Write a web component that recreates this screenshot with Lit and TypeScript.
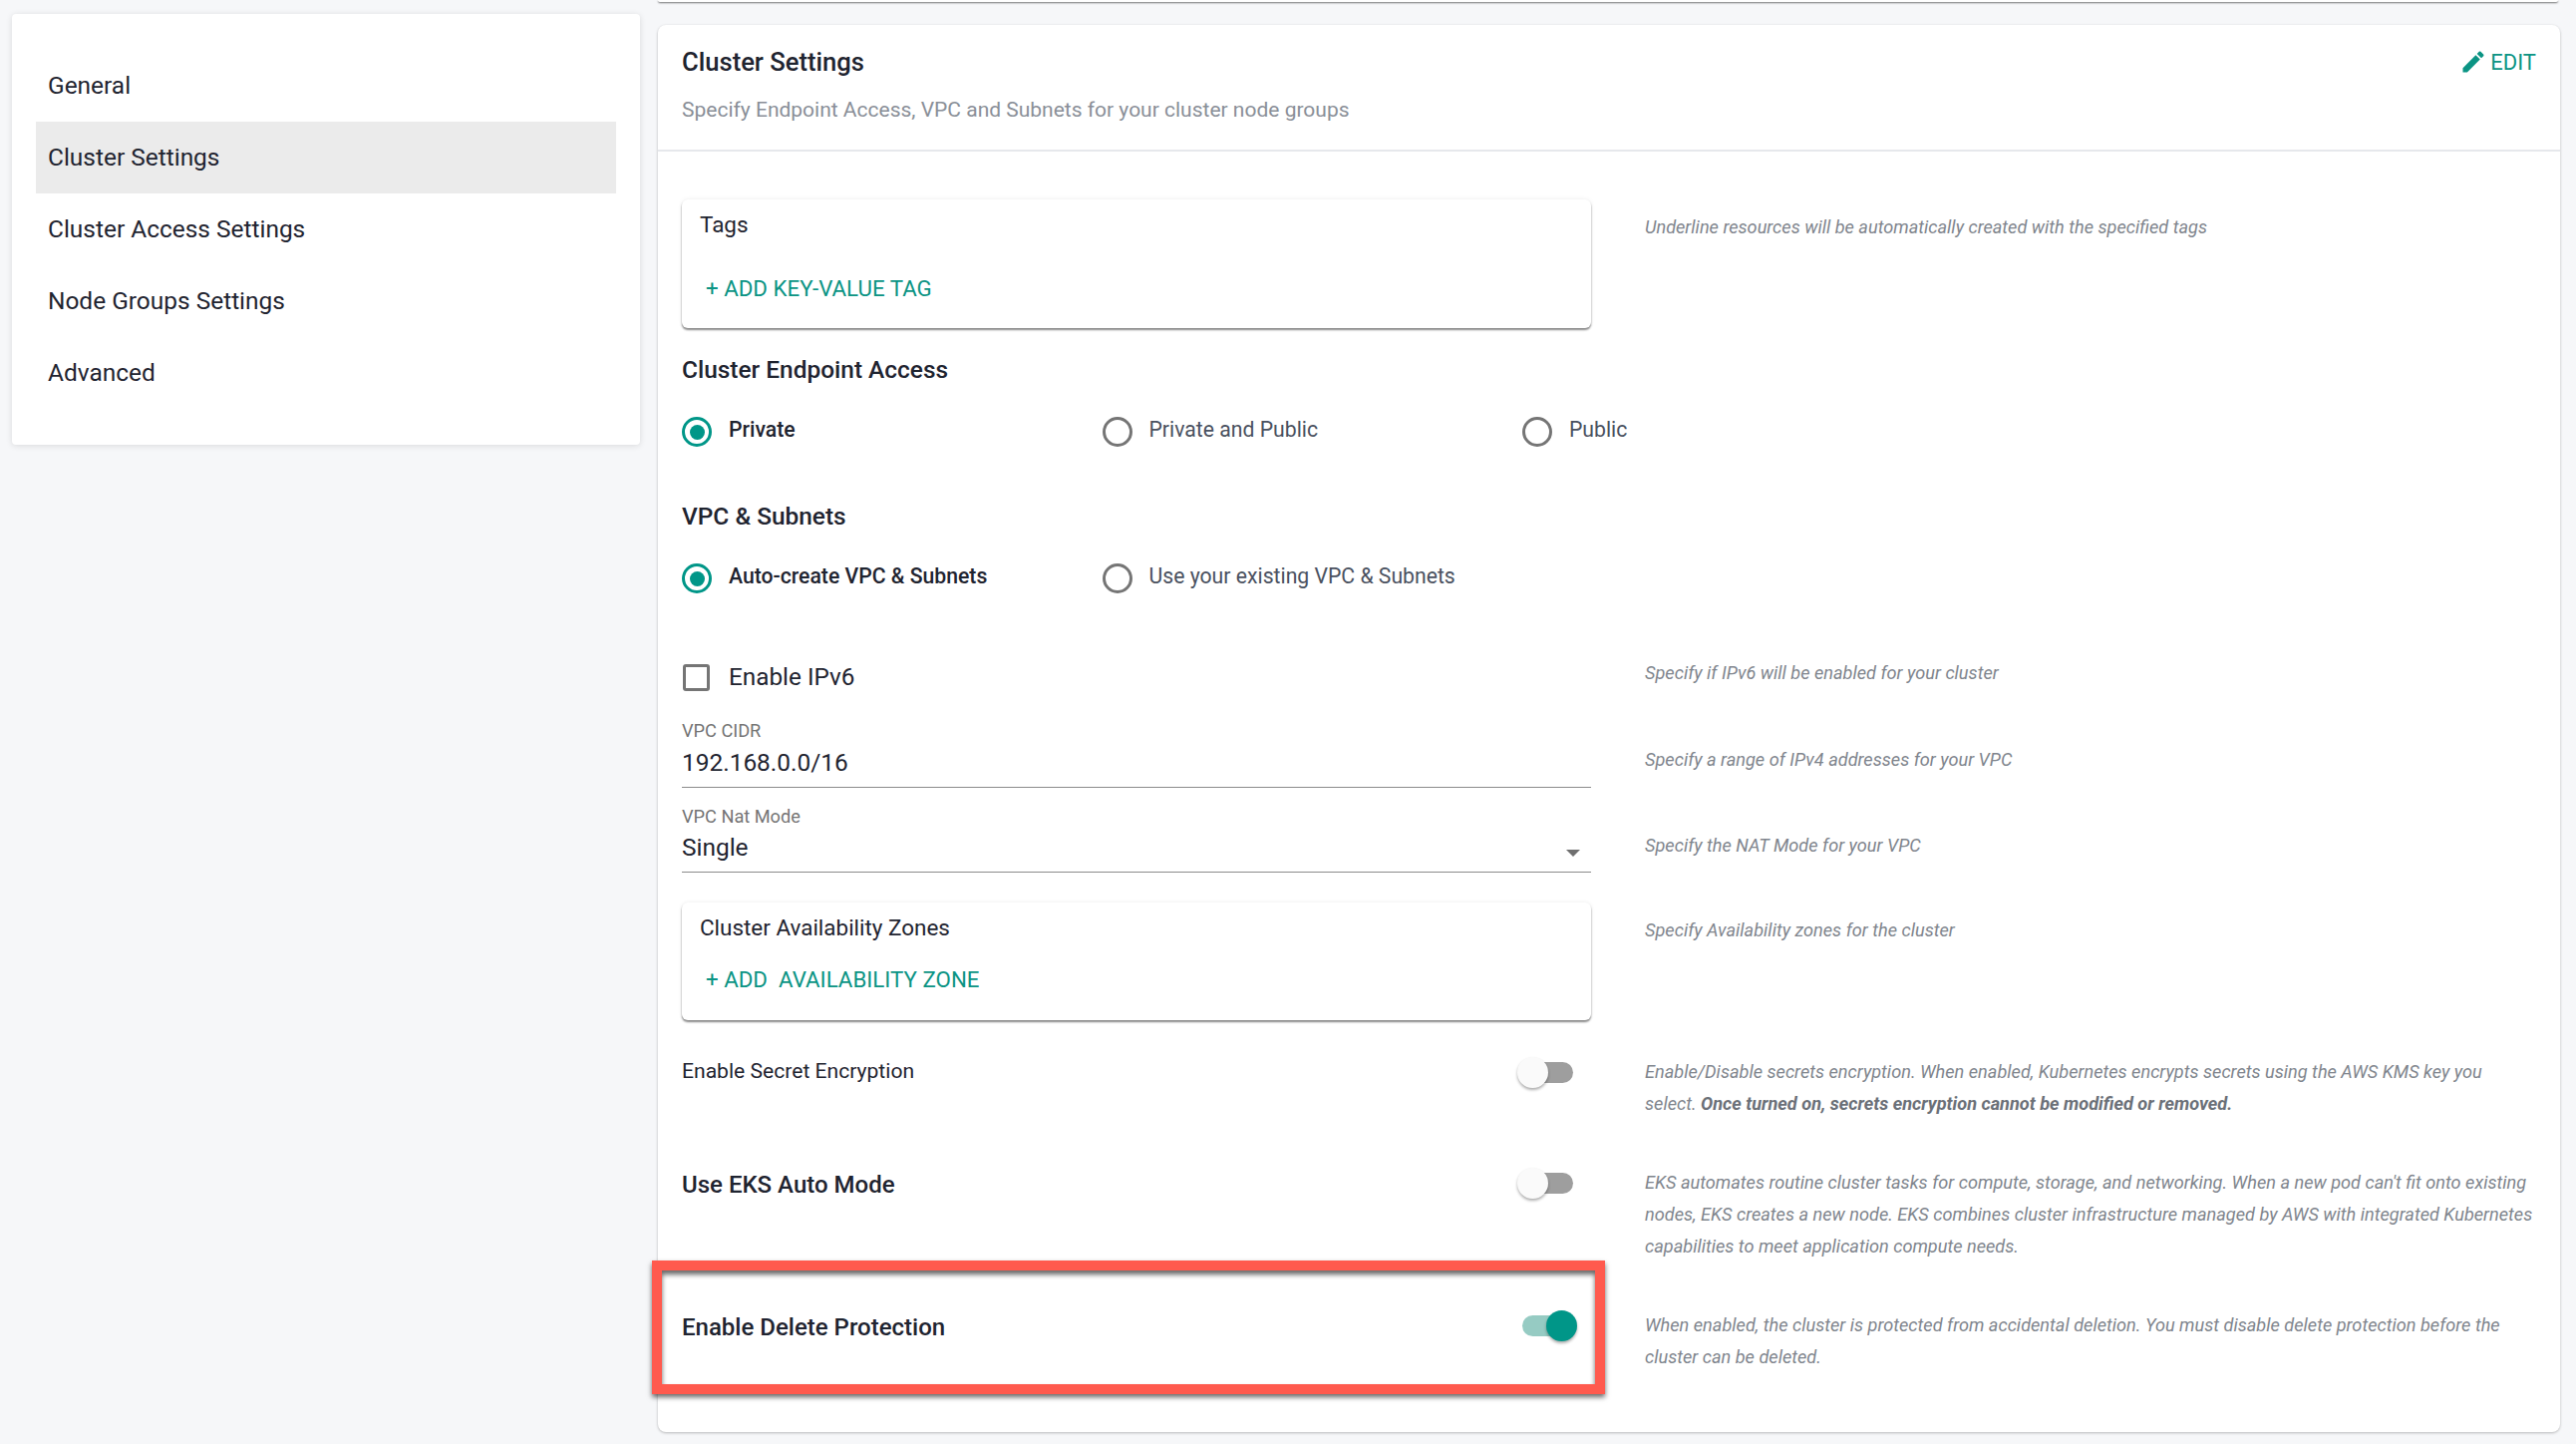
import { LitElement, html, css } from "lit";
import { customElement } from "lit/decorators.js";

const navItems = ["General", "Cluster Settings", "Cluster Access Settings", "Node Groups Settings", "Advanced"];

@customElement("app-root")
export class AppRoot extends LitElement {
  static styles = css`
    :host {
      display: block;
      width: 2584px;
      height: 1448px;
      overflow: hidden;
      background: #f6f7f9;
      font-family: Roboto, "Liberation Sans", sans-serif;
      color: #1f2430;
    }
    .page {
      display: flex;
      align-items: flex-start;
      padding-left: 12px;
      gap: 18px;
    }
    .nav {
      width: 630px;
      margin-top: 14px;
      padding: 36px 0;
      box-sizing: border-box;
      background: #fff;
      border-radius: 4px;
      box-shadow: 0 1px 6px rgba(0, 0, 0, 0.12);
    }
    .nav-item {
      height: 72px;
      margin: 0 24px;
      padding: 0 0 2px 12px;
      box-sizing: border-box;
      display: flex;
      align-items: center;
      font-size: 24.45px;
    }
    .nav-item.active {
      background: #ebebeb;
    }
    .main {
      width: 908px;
      flex: 1;
      margin-right: 16px;
    }
    .prev {
      height: 2px;
      background: #fff;
      border-radius: 0 0 6px 6px;
      box-shadow: 0 1px 2px rgba(0, 0, 0, 0.55);
      margin-right: 2px;
    }
    .card {
      margin-top: 23px;
      background: #fff;
      border-radius: 8px;
      box-shadow: 0 1px 3px rgba(0, 0, 0, 0.25);
    }
    .head {
      height: 127px;
      box-sizing: border-box;
      padding: 21px 24px 0;
      border-bottom: 2px solid #e6e8ec;
      display: flex;
      justify-content: space-between;
    }
    .title {
      font-size: 25.6px;
      font-weight: 500;
      line-height: 32px;
    }
    .sub {
      margin-top: 16px;
      font-size: 21px;
      line-height: 32px;
      color: #8a8f98;
    }
    .edit {
      display: flex;
      align-items: center;
      height: 32px;
      gap: 3px;
      font-size: 22px;
      color: #0b9484;
    }
    .edit svg {
      width: 28px;
      height: 28px;
      fill: #0b9484;
    }
    .body {
      padding: 48px 24px 59px;
    }
    .row {
      display: grid;
      grid-template-columns: 912px 1fr;
      column-gap: 54px;
      position: relative;
    }
    .hint {
      font-size: 18.15px;
      font-style: italic;
      line-height: 32px;
      color: #80858d;
      padding-right: 2px;
    }
    .hint b {
      font-weight: 700;
      color: #6b7078;
    }
    .box {
      background: #fff;
      border-radius: 6px;
      box-shadow: 0 2px 2px rgba(0, 0, 0, 0.45), 0 0 4px rgba(0, 0, 0, 0.08);
      padding-left: 18px;
      box-sizing: border-box;
      font-size: 22.45px;
    }
    .box-title {
      line-height: 32px;
    }
    .add {
      font-size: 22.3px;
      line-height: 32px;
      color: #0b9484;
      padding-left: 6px;
      white-space: pre;
    }
    .section {
      font-size: 24.45px;
      font-weight: 500;
      line-height: 32px;
    }
    .radios {
      display: flex;
    }
    .radio {
      width: 421.5px;
      display: flex;
      align-items: center;
      gap: 17px;
      height: 30px;
      font-size: 21.2px;
      color: #4a5160;
    }
    .radio span {
      position: relative;
      top: -3px;
    }
    .radio.on {
      font-weight: 500;
      color: #1f2430;
    }
    .dot {
      width: 30px;
      height: 30px;
      box-sizing: border-box;
      border: 3.5px solid #757575;
      border-radius: 50%;
      flex: none;
      display: flex;
      align-items: center;
      justify-content: center;
    }
    .on .dot {
      border-color: #009688;
    }
    .on .dot::after {
      content: "";
      width: 15px;
      height: 15px;
      border-radius: 50%;
      background: #009688;
    }
    .check {
      display: flex;
      align-items: center;
      gap: 19px;
      height: 32px;
      font-size: 24.3px;
    }
    .check i {
      width: 27px;
      height: 27px;
      margin-left: 1px;
      box-sizing: border-box;
      border: 3.5px solid #757575;
      border-radius: 3px;
    }
    .check span {
      position: relative;
      top: -1px;
    }
    .field {
      border-bottom: 1.5px solid #8c8c8c;
      position: relative;
    }
    .field label {
      display: block;
      font-size: 18.2px;
      line-height: 24px;
      color: #757575;
    }
    .field .value {
      font-size: 24.45px;
      line-height: 40px;
      padding-bottom: 3.5px;
    }
    .field .value.select {
      margin-top: -1px;
      padding-bottom: 4.5px;
    }
    .arrow {
      position: absolute;
      right: 11px;
      bottom: 15px;
      width: 0;
      height: 0;
      border-left: 7px solid transparent;
      border-right: 7px solid transparent;
      border-top: 7px solid #6f6f6f;
    }
    .setting {
      display: flex;
      justify-content: space-between;
      align-items: center;
      height: 32px;
      font-size: 21.1px;
    }
    .setting.strong {
      font-size: 24px;
      font-weight: 500;
    }
    .toggle {
      position: relative;
      width: 51px;
      height: 21px;
      margin-right: 18px;
      border-radius: 11px;
      background: #9e9e9e;
    }
    .toggle::after {
      content: "";
      position: absolute;
      top: -5px;
      left: -5px;
      width: 31px;
      height: 31px;
      border-radius: 50%;
      background: #fafafa;
      box-shadow: 0 2px 3px rgba(0, 0, 0, 0.32);
    }
    .toggle.on {
      background: #96cbc3;
    }
    .toggle.on::after {
      left: auto;
      right: -4px;
      background: #009688;
    }
    .mark {
      position: absolute;
      left: -30px;
      top: -47.5px;
      width: 956px;
      height: 134px;
      box-sizing: border-box;
      border: 10px solid #ff5a4e;
      box-shadow: 0 3px 5px rgba(0, 0, 0, 0.6), inset 0 4px 5px rgba(0, 0, 0, 0.6);
      pointer-events: none;
    }
    .mt-tags { height: 129px; }
    .mt-ep { margin-top: 26px; }
    .mt-radio { margin-top: 31px; }
    .mt-vpc { margin-top: 54px; }
    .mt-check { margin-top: 68px; }
    .mt-cidr { margin-top: 26px; }
    .mt-nat { margin-top: 17px; }
    .mt-az { margin-top: 30px; }
    .mt-secret { margin-top: 35px; }
    .mt-eks { margin-top: 46.5px; }
    .mt-del { margin-top: 45.5px; }
    .h-tags { margin-top: 12px; }
    .h-check { margin-top: -4px; }
    .h-field { margin-top: 25px; }
    .h-az { margin-top: 12px; }
    .h-secret { margin-top: 1px; }
    .h-del { margin-top: 1.5px; }
    .tags-title { padding-top: 9px; }
    .tags-add { margin-top: 32px; }
    .az { height: 118px; }
    .az-title { padding-top: 9px; }
    .az-add { margin-top: 20px; }
    .secret-label { position: relative; top: -0.5px; }
    .secret-toggle { top: 1px; }
    .eks-label { position: relative; top: 2.5px; }
    .eks-toggle { top: 0.5px; }
    .del-label { position: relative; top: 4px; }
    .del-toggle { top: 2px; }
  `;

  render() {
    return html`
      <div class="page">
        <div class="nav">
          ${navItems.map(
            (n) => html`<div class="nav-item ${n === "Cluster Settings" ? "active" : ""}">${n}</div>`
          )}
        </div>
        <div class="main">
          <div class="prev"></div>
          <div class="card">
            <div class="head">
              <div>
                <div class="title">Cluster Settings</div>
                <div class="sub">Specify Endpoint Access, VPC and Subnets for your cluster node groups</div>
              </div>
              <div class="edit">
                <svg viewBox="0 0 24 24">
                  <path d="M3 17.25V21h3.75L17.81 9.94l-3.75-3.75L3 17.25zM20.71 7.04c.39-.39.39-1.02 0-1.41l-2.34-2.34c-.39-.39-1.02-.39-1.41 0l-1.83 1.83 3.75 3.75 1.83-1.83z"></path>
                </svg>
                EDIT
              </div>
            </div>
            <div class="body">
              <div class="row mt-tags">
                <div class="box">
                  <div class="box-title tags-title">Tags</div>
                  <div class="add tags-add">+ ADD KEY-VALUE TAG</div>
                </div>
                <div class="hint h-tags">Underline resources will be automatically created with the specified tags</div>
              </div>

              <div class="section mt-ep">Cluster Endpoint Access</div>
              <div class="radios mt-radio">
                <div class="radio on"><div class="dot"></div><span>Private</span></div>
                <div class="radio"><div class="dot"></div><span>Private and Public</span></div>
                <div class="radio"><div class="dot"></div><span>Public</span></div>
              </div>

              <div class="section mt-vpc">VPC &amp; Subnets</div>
              <div class="radios mt-radio">
                <div class="radio on"><div class="dot"></div><span>Auto-create VPC &amp; Subnets</span></div>
                <div class="radio"><div class="dot"></div><span>Use your existing VPC &amp; Subnets</span></div>
              </div>

              <div class="row mt-check">
                <div class="check"><i></i><span>Enable IPv6</span></div>
                <div class="hint h-check">Specify if IPv6 will be enabled for your cluster</div>
              </div>

              <div class="row mt-cidr">
                <div class="field">
                  <label>VPC CIDR</label>
                  <div class="value">192.168.0.0/16</div>
                </div>
                <div class="hint h-field">Specify a range of IPv4 addresses for your VPC</div>
              </div>

              <div class="row mt-nat">
                <div class="field">
                  <label>VPC Nat Mode</label>
                  <div class="value select">Single</div>
                  <div class="arrow"></div>
                </div>
                <div class="hint h-field">Specify the NAT Mode for your VPC</div>
              </div>

              <div class="row mt-az">
                <div class="box az">
                  <div class="box-title az-title">Cluster Availability Zones</div>
                  <div class="add az-add">+ ADD  AVAILABILITY ZONE</div>
                </div>
                <div class="hint h-az">Specify Availability zones for the cluster</div>
              </div>

              <div class="row mt-secret">
                <div class="setting">
                  <span class="secret-label">Enable Secret Encryption</span><div class="toggle secret-toggle"></div>
                </div>
                <div class="hint h-secret">
                  Enable/Disable secrets encryption. When enabled, Kubernetes encrypts secrets using the AWS KMS key you
                  select. <b>Once turned on, secrets encryption cannot be modified or removed.</b>
                </div>
              </div>

              <div class="row mt-eks">
                <div class="setting strong">
                  <span class="eks-label">Use EKS Auto Mode</span><div class="toggle eks-toggle"></div>
                </div>
                <div class="hint">
                  EKS automates routine cluster tasks for compute, storage, and networking. When a new pod can't fit onto
                  existing nodes, EKS creates a new node. EKS combines cluster infrastructure managed by AWS with integrated
                  Kubernetes capabilities to meet application compute needs.
                </div>
              </div>

              <div class="row mt-del">
                <div class="setting strong">
                  <span class="del-label">Enable Delete Protection</span><div class="toggle on del-toggle"></div>
                </div>
                <div class="hint h-del">
                  When enabled, the cluster is protected from accidental deletion. You must disable delete protection before
                  the cluster can be deleted.
                </div>
                <div class="mark"></div>
              </div>
            </div>
          </div>
        </div>
      </div>
    `;
  }
}
